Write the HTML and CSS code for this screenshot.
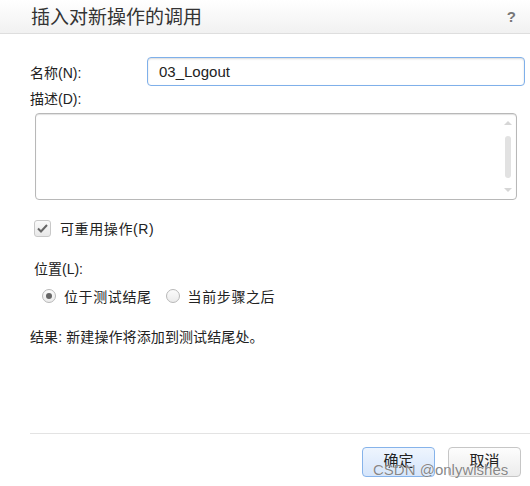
FILE: index.html
```html
<!DOCTYPE html>
<html lang="zh">
<head>
<meta charset="utf-8">
<link rel="stylesheet" href="styles.css">
</head>
<body>
<div class="dialog">
  <header class="titlebar">
    <h1 class="title">插入对新操作的调用</h1>
    <span class="help">?</span>
  </header>
  <main class="content">
    <div class="row-name">
      <label class="lbl">名称(N):</label>
      <div class="input">03_Logout</div>
    </div>
    <label class="lbl desc-lbl">描述(D):</label>
    <div class="textarea">
      <div class="scroll">
        <span class="arrow up"></span>
        <span class="thumb"></span>
        <span class="arrow down"></span>
      </div>
    </div>
    <div class="check-row">
      <span class="checkbox">
        <svg width="11" height="9" viewBox="0 0 11 9"><path d="M1 4.5 L4 7.5 L10 1" fill="none" stroke="#666" stroke-width="2"/></svg>
      </span>
      <span class="txt">可重用操作(R)</span>
    </div>
    <div class="lbl pos-lbl">位置(L):</div>
    <div class="radio-row">
      <span class="radio on"></span><span class="txt">位于测试结尾</span>
      <span class="radio second"></span><span class="txt">当前步骤之后</span>
    </div>
    <p class="result">结果: 新建操作将添加到测试结尾处。</p>
  </main>
  <footer class="footer">
    <button class="btn primary">确定</button>
    <button class="btn">取消</button>
    <span class="watermark">CSDN @onlywishes</span>
  </footer>
</div>
</body>
</html>
```
FILE: styles.css
```css
* { box-sizing: border-box; }
html, body { margin: 0; padding: 0; background: #fff; }
body {
  width: 530px; height: 486px; overflow: hidden;
  font-family: "Liberation Sans", Arial, "Noto Sans CJK SC", sans-serif;
  color: #222;
  font-size: 14px;
}
.dialog { width: 530px; height: 486px; display: flex; flex-direction: column; }
.titlebar {
  height: 34px;
  display: flex; align-items: center; justify-content: space-between;
  padding: 0 14px 3px 31px;
  background: linear-gradient(#ffffff, #f1f1f1);
  border-bottom: 1px solid #dedede;
}
.title { margin: 0; font-size: 19px; font-weight: normal; color: #333; letter-spacing: 0; }
.help { font-size: 15px; font-weight: bold; color: #777; margin-top: 2px; }
.content { padding: 0 13px 0 30px; flex: 1; }
.row-name { display: flex; align-items: center; margin-top: 23px; height: 29px; }
.lbl { font-size: 14px; color: #222; }
.row-name .lbl { width: 117px; }
.input {
  flex: 1; height: 29px; border: 1px solid #7fb0ea; border-radius: 4px;
  box-shadow: inset 0 1px 2px rgba(0,0,0,0.15);
  padding: 0 11px; line-height: 27px; font-size: 15px; color: #222;
  margin-right: -8px;
}
.desc-lbl { display: block; margin-top: 4px; line-height: 18px; }
.textarea {
  margin: 5px 0 0 5px; width: 482px; height: 87px;
  border: 1px solid #b8b8b8; border-radius: 4px;
  box-shadow: inset 0 1px 1px rgba(0,0,0,0.12);
  display: flex; justify-content: flex-end;
}
.scroll { width: 17px; display: flex; flex-direction: column; align-items: center; justify-content: space-between; padding: 7px 0 7px; }
.arrow { width: 0; height: 0; border-left: 4px solid transparent; border-right: 4px solid transparent; }
.arrow.up { border-bottom: 4px solid #d6d6d6; }
.arrow.down { border-top: 4px solid #d6d6d6; }
.thumb { width: 6px; height: 42px; background: #e2e2e2; border-radius: 3px; }
.check-row { display: flex; align-items: center; margin: 19px 0 0 4px; height: 18px; }
.checkbox {
  width: 17px; height: 17px; border: 1px solid #c8c8c8; border-radius: 3px;
  background: linear-gradient(#fafafa, #e8e8e8);
  display: flex; align-items: center; justify-content: center; margin-right: 9px;
}
.txt { font-size: 14px; letter-spacing: 0.6px; }
.pos-lbl { margin: 23px 0 0 4px; line-height: 18px; }
.radio-row { display: flex; align-items: center; margin: 9px 0 0 12px; height: 18px; }
.radio {
  width: 14px; height: 14px; border-radius: 50%; border: 1px solid #b8b8b8;
  background: linear-gradient(#fbfbfb, #ebebeb); margin-right: 8px; position: relative;
}
.radio.on::after {
  content: ""; position: absolute; left: 3px; top: 3px; width: 6px; height: 6px; border-radius: 50%; background: #666;
}
.radio.second { margin-left: 14px; }
.result { margin: 23px 0 0 0; font-size: 14px; line-height: 18px; letter-spacing: 0.1px; }
.footer {
  position: relative;
  margin-left: 30px; height: 53px; border-top: 1px solid #e3e3e3;
  display: flex; justify-content: flex-end; align-items: flex-start;
  padding: 13px 9px 0 0; gap: 13px;
}
.btn {
  width: 73px; height: 30px; border: 1px solid #c6c6c6; border-radius: 4px;
  background: linear-gradient(#fdfdfd, #ececec);
  font-family: "Liberation Sans", "Noto Sans CJK SC", sans-serif; font-size: 15px; color: #222;
  padding: 0 0 6px;
}
.btn.primary { border-color: #86b3ea; background: linear-gradient(#eef5fe, #d5e5fb); }
.watermark {
  position: absolute; left: 343px; top: 27px;
  font-family: "Liberation Sans", Arial, sans-serif; font-size: 15px; color: rgba(120,120,120,0.9);
  text-shadow: 0 0 1px #fff;
}
```
